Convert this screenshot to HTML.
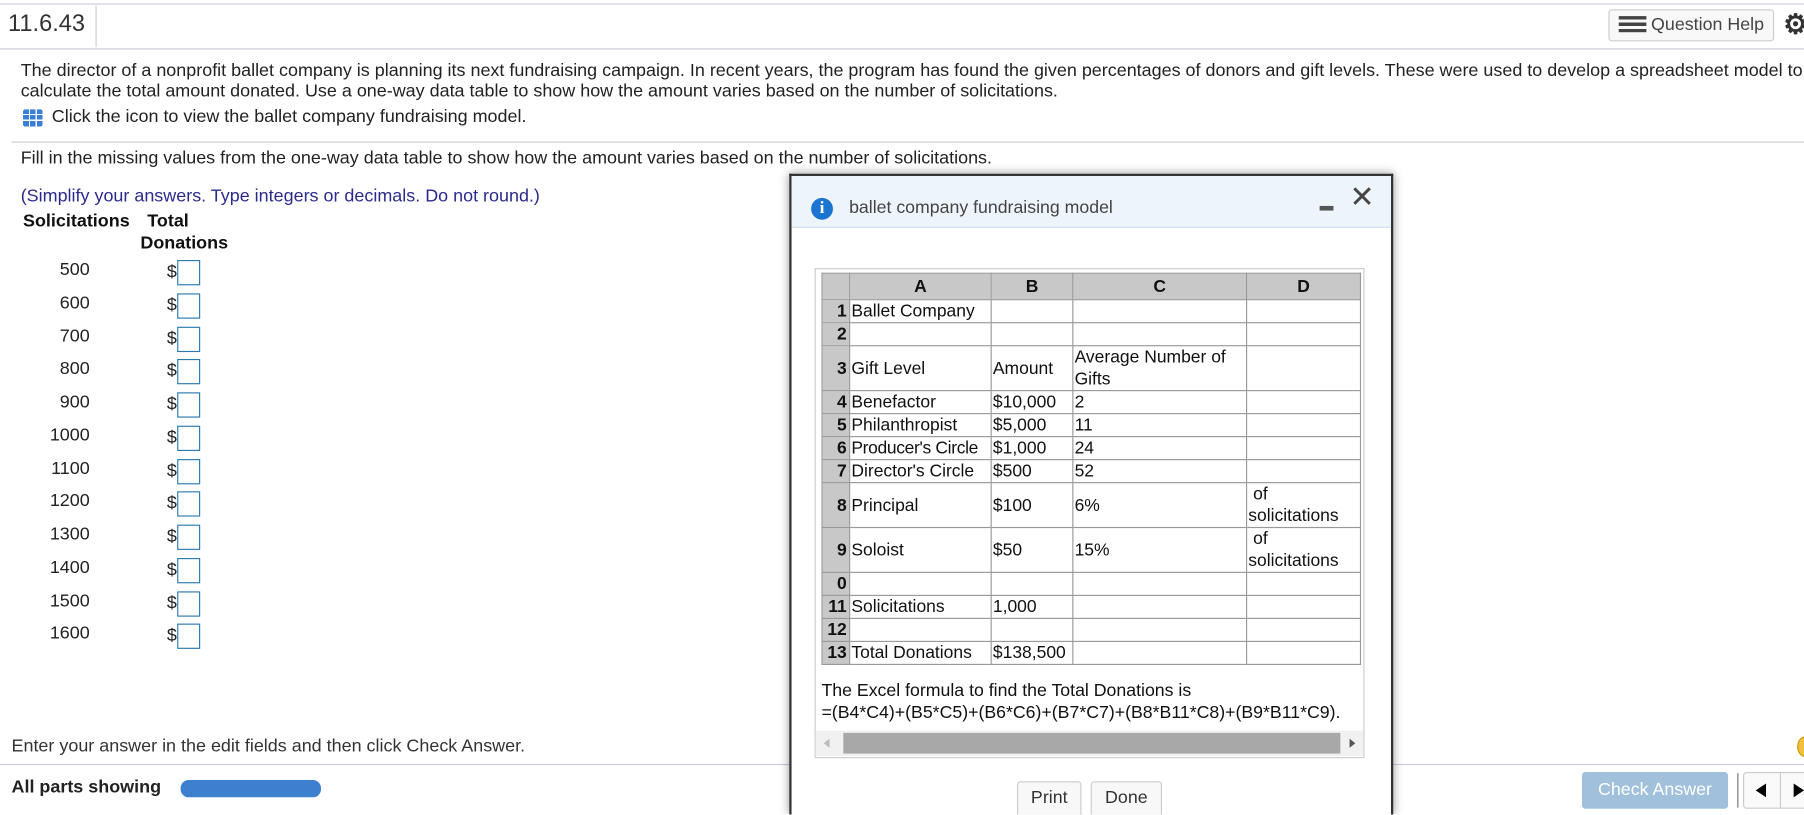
<!DOCTYPE html>
<html><head><meta charset="utf-8"><style>
*{box-sizing:border-box;margin:0;padding:0}
html,body{width:1804px;height:814px;overflow:hidden;background:#fff}
#w{position:absolute;left:0;top:0;width:1568px;height:708px;overflow:hidden;transform:scale(1.15051);transform-origin:0 0;font-family:"Liberation Sans",Arial,sans-serif;color:#222;font-size:15.6px}
.a{position:absolute;white-space:nowrap}
.box{position:absolute;width:20px;height:22px;border:1px solid #2a7ab0;background:#fff}
table{border-collapse:collapse;position:absolute;left:714px;top:237px;font-size:15.2px;color:#111;table-layout:fixed}
td{border:1px solid #999;padding:0 1px;line-height:19px;vertical-align:middle;white-space:nowrap;overflow:hidden}
td.h{background:#c8c8c8;font-weight:bold;text-align:right;padding:0 2px 0 0}
tr.hd td{background:#c8c8c8;font-weight:bold;text-align:center;height:23px}
.btn{position:absolute;border:1px solid #ccc;border-radius:3px;background:#f8f8f8;color:#333;font-size:15.5px;text-align:center}
</style></head><body><div id="w">
<div class="a" style="left:0;top:3px;width:1568px;border-top:1px solid #ccd"></div>
<div class="a" style="left:7px;top:9px;font-size:20.5px;color:#333">11.6.43</div>
<div class="a" style="left:83px;top:5px;height:36px;border-left:1px solid #ccd"></div>
<div class="a" style="left:0;top:42px;width:1568px;border-top:1px solid #ccd"></div>
<div class="btn" style="left:1398px;top:8px;width:144px;height:28px;line-height:26px;font-size:15.5px;color:#444"><span style="display:inline-block;vertical-align:-2px;width:24px;height:14px;background:linear-gradient(#444 0 3px,transparent 3px 5.5px,#444 5.5px 8.5px,transparent 8.5px 11px,#444 11px 14px)"></span> Question Help</div>
<div class="a" style="left:1550px;top:10px;font-size:24px;color:#333;line-height:24px;font-weight:bold">⚙</div>
<div class="a" style="left:18px;top:53px;line-height:18px">The director of a nonprofit ballet company is planning its next fundraising campaign. In recent years, the program has found the given percentages of donors and gift levels. These were used to develop a spreadsheet model to<br>calculate the total amount donated. Use a one-way data table to show how the amount varies based on the number of solicitations.</div>
<div class="a" style="left:20px;top:95px;width:17px;height:15px;background:#3a7fd6;border-radius:2px;background-image:linear-gradient(90deg,transparent 5px,#fff 5px 6px,transparent 6px 11px,#fff 11px 12px,transparent 12px),linear-gradient(transparent 4px,#fff 4px 5px,transparent 5px 9px,#fff 9px 10px,transparent 10px)"></div>
<div class="a" style="left:45px;top:93px">Click the icon to view the ballet company fundraising model.</div>
<div class="a" style="left:10px;top:123px;width:1558px;border-top:1px solid #ccc"></div>
<div class="a" style="left:18px;top:129px">Fill in the missing values from the one-way data table to show how the amount varies based on the number of solicitations.</div>
<div class="a" style="left:18px;top:162px;color:#2b2b8c">(Simplify your answers. Type integers or decimals. Do not round.)</div>
<div class="a" style="left:20px;top:184px;font-weight:bold;color:#111">Solicitations</div>
<div class="a" style="left:128px;top:184px;font-weight:bold;color:#111">Total</div>
<div class="a" style="left:122px;top:203px;font-weight:bold;color:#111">Donations</div>
<div id="rows"></div>
<div class="a" style="left:10px;top:640px;color:#333">Enter your answer in the edit fields and then click Check Answer.</div>
<div class="a" style="left:0;top:664px;width:1568px;border-top:1px solid #ccd"></div>
<div class="a" style="left:10px;top:676px;font-weight:bold;color:#222">All parts showing</div>
<div class="a" style="left:157px;top:678px;width:122px;height:15px;border-radius:7px;background:#3f7fd0"></div>
<div class="a" style="left:1375px;top:671px;width:127px;height:32px;border-radius:3px;background:#a0c0dc;color:#fff;font-size:15.5px;line-height:32px;text-align:center">Check Answer</div>
<div class="a" style="left:1510px;top:672px;height:30px;border-left:1px solid #777"></div>
<div class="a" style="left:1515px;top:671px;width:60px;height:32px;border:1px solid #ccc;border-radius:3px;background:#fafafa"></div>
<div class="a" style="left:1547px;top:671px;height:32px;border-left:1px solid #ccc"></div>
<div class="a" style="left:1526px;top:681px;width:0;height:0;border-top:6px solid transparent;border-bottom:6px solid transparent;border-right:9px solid #000"></div>
<div class="a" style="left:1559px;top:681px;width:0;height:0;border-top:6px solid transparent;border-bottom:6px solid transparent;border-left:9px solid #000"></div>
<div class="a" style="left:1562px;top:640px;width:14px;height:18px;border-radius:50%;background:#f0c040;border:1px solid #c90"></div>
<!-- modal -->
<div class="a" style="left:686px;top:151px;width:525px;height:557px;border:2px solid #333;border-bottom:none;background:#fff;box-shadow:0 0 8px rgba(0,0,0,.4)"></div>
<div class="a" style="left:688px;top:153px;width:521px;height:45px;background:#eef4fc;border-bottom:1px solid #cfe0f2"></div>
<div class="a" style="left:705px;top:172px;width:19px;height:19px;border-radius:50%;background:#1b74d0;color:#fff;font-weight:bold;font-family:'Liberation Serif',serif;font-size:15px;line-height:19px;text-align:center">i</div>
<div class="a" style="left:738px;top:172px;color:#444;font-size:15.4px">ballet company fundraising model</div>
<div class="a" style="left:1147px;top:179px;width:12px;height:4px;background:#555"></div>
<div class="a" style="left:1173px;top:156px;font-size:26px;color:#444;line-height:30px;font-weight:300">✕</div>
<div class="a" style="left:708px;top:233px;width:478px;height:426px;border:1px solid #ccc"></div>
<table>
<colgroup><col style="width:24px"><col style="width:123px"><col style="width:71px"><col style="width:151px"><col style="width:99px"></colgroup>
<tr class="hd"><td></td><td>A</td><td>B</td><td>C</td><td>D</td></tr>
<tr><td class="h">1</td><td>Ballet Company</td><td></td><td></td><td></td></tr>
<tr><td class="h">2</td><td></td><td></td><td></td><td></td></tr>
<tr><td class="h">3</td><td>Gift Level</td><td>Amount</td><td>Average Number of<br>Gifts</td><td></td></tr>
<tr><td class="h">4</td><td>Benefactor</td><td>$10,000</td><td>2</td><td></td></tr>
<tr><td class="h">5</td><td>Philanthropist</td><td>$5,000</td><td>11</td><td></td></tr>
<tr><td class="h">6</td><td style="letter-spacing:-0.3px">Producer's Circle</td><td>$1,000</td><td>24</td><td></td></tr>
<tr><td class="h">7</td><td>Director's Circle</td><td>$500</td><td>52</td><td></td></tr>
<tr><td class="h">8</td><td>Principal</td><td>$100</td><td>6%</td><td>&nbsp;of<br>solicitations</td></tr>
<tr><td class="h">9</td><td>Soloist</td><td>$50</td><td>15%</td><td>&nbsp;of<br>solicitations</td></tr>
<tr><td class="h">0</td><td></td><td></td><td></td><td></td></tr>
<tr><td class="h">11</td><td>Solicitations</td><td>1,000</td><td></td><td></td></tr>
<tr><td class="h">12</td><td></td><td></td><td></td><td></td></tr>
<tr><td class="h">13</td><td>Total Donations</td><td>$138,500</td><td></td><td></td></tr>
</table>
<div class="a" style="left:714px;top:591px;line-height:19px;color:#111;font-size:15.4px">The Excel formula to find the Total Donations is<br>=(B4*C4)+(B5*C5)+(B6*C6)+(B7*C7)+(B8*B11*C8)+(B9*B11*C9).</div>
<div class="a" style="left:709px;top:635px;width:476px;height:22px;background:#f1f1f1"></div>
<div class="a" style="left:733px;top:637px;width:432px;height:18px;background:#a8a8a8"></div>
<div class="a" style="left:716px;top:642px;border-top:4px solid transparent;border-bottom:4px solid transparent;border-right:5px solid #bbb"></div>
<div class="a" style="left:1173px;top:642px;border-top:4px solid transparent;border-bottom:4px solid transparent;border-left:5px solid #555"></div>
<div class="btn" style="left:884px;top:679px;width:56px;height:34px;line-height:28px">Print</div>
<div class="btn" style="left:948px;top:679px;width:62px;height:34px;line-height:28px">Done</div>
</div>
<script>
var s='',v=[500,600,700,800,900,1000,1100,1200,1300,1400,1500,1600];
for(var i=0;i<12;i++){var y=226+i*28.75;
s+='<div class="a" style="left:28px;width:50px;text-align:right;top:'+y+'px;color:#222">'+v[i]+'</div><div class="a" style="left:145px;top:'+(y+2)+'px">$</div><div class="box" style="left:154px;top:'+y+'px"></div>';}
document.getElementById('rows').outerHTML=s;
</script>
</body></html>
